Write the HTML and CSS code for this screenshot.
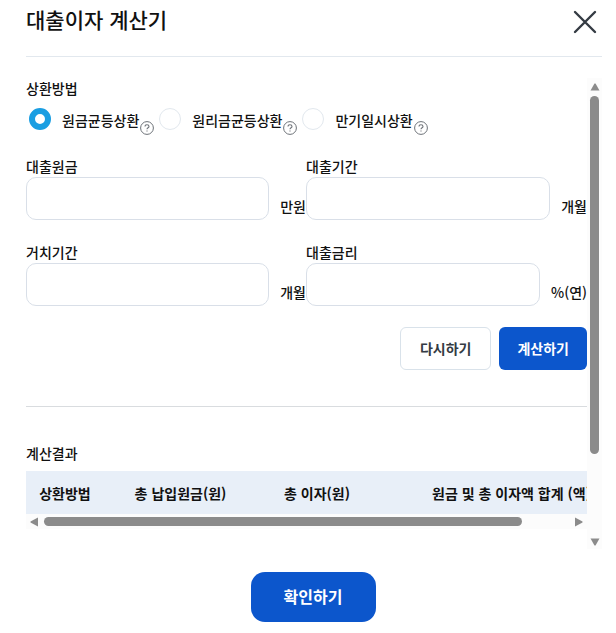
FILE: index.html
```html
<!DOCTYPE html>
<html lang="ko">
<head>
	<meta charset="utf-8">
	<meta name="viewport" content="width=device-width,initial-scale=1">
	<title>대출이자 계산기</title>
	<link rel="stylesheet" href="styles.css">
</head>
<body>
	<div class="popup">
		<header class="popup-header">
			<h1>대출이자 계산기</h1>
			<button type="button" class="btn-close" aria-label="닫기">
				<svg width="24" height="24" viewBox="0 0 24 24"><path d="M2 2L22 22M22 2L2 22" fill="none" stroke="#343b43" stroke-width="2.4" stroke-linecap="round"/></svg>
			</button>
		</header>
		<div class="popup-body">
			<form class="content">
				<fieldset class="method">
					<legend>상환방법</legend>
					<div class="radios">
						<div class="radio-item">
							<input type="radio" name="method" id="method1" checked>
							<label for="method1">원금균등상환</label>
							<button type="button" class="help" aria-label="원금균등상환 도움말">
								<svg width="14" height="14" viewBox="0 0 14 14" fill="none" stroke="#6d7278"><circle cx="7" cy="7" r="6.4"/><path d="M5 5.6C5 4.3 5.9 3.7 7 3.7S9 4.4 9 5.4C9 6.7 7 6.8 7 8.3M7 9.4V10.6" stroke-width="1.1"/></svg>
							</button>
						</div>
						<div class="radio-item">
							<input type="radio" name="method" id="method2">
							<label for="method2">원리금균등상환</label>
							<button type="button" class="help" aria-label="원리금균등상환 도움말">
								<svg width="14" height="14" viewBox="0 0 14 14" fill="none" stroke="#6d7278"><circle cx="7" cy="7" r="6.4"/><path d="M5 5.6C5 4.3 5.9 3.7 7 3.7S9 4.4 9 5.4C9 6.7 7 6.8 7 8.3M7 9.4V10.6" stroke-width="1.1"/></svg>
							</button>
						</div>
						<div class="radio-item">
							<input type="radio" name="method" id="method3">
							<label for="method3">만기일시상환</label>
							<button type="button" class="help" aria-label="만기일시상환 도움말">
								<svg width="14" height="14" viewBox="0 0 14 14" fill="none" stroke="#6d7278"><circle cx="7" cy="7" r="6.4"/><path d="M5 5.6C5 4.3 5.9 3.7 7 3.7S9 4.4 9 5.4C9 6.7 7 6.8 7 8.3M7 9.4V10.6" stroke-width="1.1"/></svg>
							</button>
						</div>
					</div>
				</fieldset>
				<div class="fields">
					<div class="field">
						<label for="amount">대출원금</label>
						<div class="input-row"><input type="text" id="amount"><span>만원</span></div>
					</div>
					<div class="field">
						<label for="period">대출기간</label>
						<div class="input-row"><input type="text" id="period"><span>개월</span></div>
					</div>
					<div class="field">
						<label for="grace">거치기간</label>
						<div class="input-row"><input type="text" id="grace"><span>개월</span></div>
					</div>
					<div class="field">
						<label for="rate">대출금리</label>
						<div class="input-row"><input type="text" id="rate"><span>%(연)</span></div>
					</div>
				</div>
				<div class="actions">
					<button type="reset" class="btn btn-line">다시하기</button>
					<button type="button" class="btn btn-fill">계산하기</button>
				</div>
				<section class="result">
					<h2>계산결과</h2>
					<div class="table-wrap">
						<table>
							<thead>
								<tr>
									<th class="col-method">상환방법</th>
									<th class="col-principal">총 납입원금(원)</th>
									<th class="col-interest">총 이자(원)</th>
									<th class="col-total">원금 및 총 이자액 합계 (액)</th>
								</tr>
							</thead>
						</table>
					</div>
					<div class="scroll scroll-x" aria-hidden="true">
						<svg width="8" height="10" viewBox="0 0 8 10"><path d="M8 .5V9.5L.5 5.5V4.5Z"/></svg>
						<div class="track"><div class="thumb"></div></div>
						<svg width="8" height="10" viewBox="0 0 8 10"><path d="M0 .5V9.5L7.5 5.5V4.5Z"/></svg>
					</div>
				</section>
			</form>
			<div class="scroll scroll-y" aria-hidden="true">
				<svg width="10" height="8" viewBox="0 0 10 8"><path d="M.5 7.5H9.5L5.5 .5H4.5Z"/></svg>
				<div class="track"><div class="thumb"></div></div>
				<svg width="10" height="8" viewBox="0 0 10 8"><path d="M.5 .5H9.5L5.5 7.5H4.5Z"/></svg>
			</div>
		</div>
		<footer class="popup-footer">
			<button type="button" class="btn-confirm">확인하기</button>
		</footer>
	</div>
</body>
</html>
```
FILE: styles.css
```css
* {box-sizing: border-box;margin: 0;padding: 0;}
body {background: #fff;color: #111;font: 500 14px/20px "Noto Sans CJK KR", sans-serif;}
button, input {font: inherit;}
button {border: 0;background: none;cursor: pointer;}
svg {display: block;}

.popup {padding: 0 14px 10px 26px;}
.popup-header {display: flex;justify-content: space-between;align-items: flex-start;height: 57px;padding: 4px 5px 0 0;border-bottom: 1px solid #e2e8ee;}
.popup-header h1 {font-size: 21px;line-height: 30px;font-weight: 500;}
.btn-close {padding-top: 6px;}

.popup-body {display: flex;margin-top: 21px;}
.content {flex: 1;min-width: 0;padding-bottom: 20px;}

/* radios */
.method {border: 0;}
.method legend {display: block;}
.radios {display: flex;gap: 5px;padding: 10px 3px 0;}
.radio-item {display: flex;align-items: center;height: 22px;}
.radio-item label {margin-left: 11px;padding-top: 2px;}
.radio-item input {appearance: none;width: 22px;height: 22px;border: 1px solid #e2e8ee;border-radius: 50%;background: #fff;}
.radio-item input:checked {border: 6px solid #1a9ee2;}
.help {align-self: flex-end;margin: 0 0 -5px 1px;}

/* inputs */
.fields {display: grid;grid-template-columns: 280px 1fr;row-gap: 23px;margin-top: 26px;}
.field label {display: block;padding-bottom: 1px;}
.fields .field {line-height: 19px;}
.input-row {display: flex;align-items: flex-end;gap: 11px;}
.input-row input {flex: 1;min-width: 0;height: 43px;padding: 0 12px;border: 1px solid #d9dfe8;border-radius: 10px;}
.input-row span {padding-bottom: 4px;}
.fields {padding-top: 1px;}

.actions {display: flex;justify-content: flex-end;gap: 8px;padding: 21px 0 36px;border-bottom: 1px solid #d9dcdf;}
.btn {height: 43px;padding: 0 18px 2px;border-radius: 6px;font-weight: 700;}
.btn-line {padding: 0 19px 2px;border: 1px solid #d9e2ea;color: #343b43;}
.btn-fill {background: #0c56cc;color: #fff;}

/* result table */
.result {padding-top: 36px;}
.result h2 {font-size: 14px;font-weight: 500;}
.table-wrap {overflow: hidden;margin-top: 8px;}
table {width: 660px;table-layout: fixed;border-collapse: collapse;background: #e8eff8;}
th {height: 43px;font-weight: 700;text-align: center;white-space: nowrap;}
.col-method {width: 78px;}
.col-principal {width: 153px;}
.col-interest {width: 120px;}
.col-total {padding-left: 55px;text-align: left;}

/* scroll bars */
.scroll {display: flex;align-items: center;background: #fcfcfc;}
.scroll svg {fill: #8b8b8b;}
.track {flex: 1;}
.thumb {border-radius: 5px;background: #8b8b8b;}
.scroll-x {height: 15px;padding: 0 4px;gap: 6px;}
.scroll-x .thumb {width: 91%;height: 9px;}
.scroll-y {flex-direction: column;width: 15px;padding: 5px 0 3px;gap: 5px;}
.scroll-y .thumb {width: 9px;height: 82%;}

.popup-footer {display: flex;justify-content: center;padding: 23px 2px 0 0;}
.btn-confirm {width: 125px;height: 50px;padding-bottom: 2px;border-radius: 14px;background: #0c56cc;color: #fff;font-size: 16px;font-weight: 700;}
```
